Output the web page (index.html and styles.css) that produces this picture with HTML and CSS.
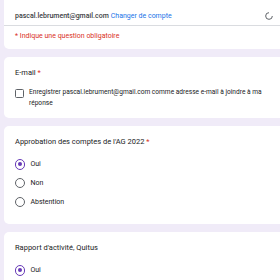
FILE: index.html
```html
<!DOCTYPE html>
<html lang="fr">

<head>
  <meta charset="UTF-8">
  <meta name="viewport" content="width=device-width, initial-scale=1.0">
  <title>Formulaire AG 2022</title>
  <link rel="stylesheet" href="styles.css">
</head>

<body>
  <div class="form">
    <!-- compte -->
    <div class="card account">
      <div class="account-row">
        <span class="mail">pascal.lebrument@gmail.com</span>
        <a class="switch" href="">Changer de compte</a>
        <svg class="cloud" width="10" height="10" viewBox="0 0 24 24">
          <path d="M12 4a8 8 0 1 0 8 8" fill="none" stroke="#5f6368" stroke-width="2.4"/>
        </svg>
      </div>
      <div class="required-note">* Indique une question obligatoire</div>
    </div>

    <!-- e-mail -->
    <div class="card question email">
      <div class="title">E-mail <span class="star">*</span></div>
      <label class="check">
        <span class="box"></span>
        <span>Enregistrer pascal.lebrument@gmail.com comme adresse e-mail à joindre à ma réponse</span>
      </label>
    </div>

    <div class="card question">
      <div class="title">Approbation des comptes de l'AG 2022 <span class="star">*</span></div>
      <ul class="options">
        <li class="checked"><span class="radio"></span>Oui</li>
        <li><span class="radio"></span>Non</li>
        <li><span class="radio"></span>Abstention</li>
      </ul>
    </div>

    <div class="card question">
      <div class="title">Rapport d'activité, Quitus</div>
      <ul class="options">
        <li class="checked"><span class="radio"></span>Oui</li>
        <li><span class="radio"></span>Non</li>
      </ul>
    </div>
  </div>
</body>

</html>
```

FILE: styles.css
```css
ul,
li {
  list-style: none;
  margin: 0;
  padding: 0;
}

a {
  text-decoration: none;
}

body {
  margin: 0;
  background-color: #f0ebf8;
  font-family: Roboto, "Liberation Sans", sans-serif;
  color: #202124;
  overflow: hidden;
  height: 280px;
}

.form {
  width: 300px;
  margin-left: 4px;
  margin-top: -6px;
  display: flex;
  flex-direction: column;
  gap: 8px;
}

.card {
  background-color: #fff;
  border-radius: 5px;
}

.account-row {
  display: flex;
  align-items: center;
  gap: 2px;
  padding: 13px 11px 0;
  height: 18px;
  border-bottom: 1px solid #dadce0;
  font-size: 7px;
}

.mail {
  font-weight: 500;
  color: #3c4043;
}

.switch {
  color: #1a73e8;
}

.cloud {
  margin-left: auto;
  margin-right: 19px;
  margin-top: -1px;
}

.required-note {
  padding: 5px 11px 8px;
  font-size: 7px;
  line-height: 10px;
  color: #d93025;
}

.question {
  padding: 11px 11px 13px;
}

.question.email {
  padding-bottom: 9px;
}

.title {
  font-size: 7.5px;
  line-height: 10px;
}

.star {
  color: #d93025;
}

.check {
  display: flex;
  gap: 5px;
  margin-top: 9px;
  font-size: 6.6px;
  line-height: 11px;
  padding-right: 30px;
}

.box {
  flex: none;
  width: 7px;
  height: 7px;
  margin-top: 2px;
  border: 1.4px solid #5f6368;
  border-radius: 1.5px;
}

.options {
  margin-top: 8px;
}

.options>li {
  display: flex;
  align-items: center;
  gap: 5px;
  height: 18.7px;
  font-size: 7px;
}

.radio {
  width: 8.4px;
  height: 8.4px;
  border: 1.1px solid #5f6368;
  border-radius: 50%;
  box-sizing: content-box;
  position: relative;
}

.checked .radio {
  border-color: #673ab7;
}

.checked .radio::after {
  content: "";
  position: absolute;
  left: 2.2px;
  top: 2.2px;
  width: 4px;
  height: 4px;
  border-radius: 50%;
  background-color: #673ab7;
}
```
